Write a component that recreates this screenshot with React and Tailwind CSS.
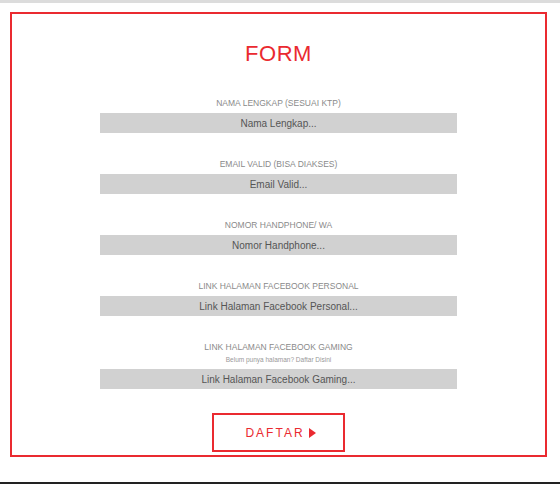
import React from "react";

const fields = [
  { label: "NAMA LENGKAP (SESUAI KTP)", placeholder: "Nama Lengkap..." },
  { label: "EMAIL VALID (BISA DIAKSES)", placeholder: "Email Valid..." },
  { label: "NOMOR HANDPHONE/ WA", placeholder: "Nomor Handphone..." },
  { label: "LINK HALAMAN FACEBOOK PERSONAL", placeholder: "Link Halaman Facebook Personal..." },
  {
    label: "LINK HALAMAN FACEBOOK GAMING",
    note: "Belum punya halaman? Daftar Disini",
    placeholder: "Link Halaman Facebook Gaming...",
  },
];

export default function App() {
  return (
    <div
      className="flex min-h-[484px] w-[560px] flex-col bg-white"
      style={{ fontFamily: '"Liberation Sans", Arial, sans-serif' }}
    >
      <div className="h-[3px] bg-[#dcdcdc]" />
      <div className="pt-[9px]">
        <div className="ml-[10px] flex h-[445px] w-[537px] flex-col items-center border-2 border-[#ea2a30] pt-[27px]">
          <h1 className="h-[26px] text-[22px] leading-[26px] font-normal tracking-[0.5px] text-[#ea2a30]">FORM</h1>

          <div className="mt-[30px] flex flex-col gap-[25px]">
            {fields.map((f, i) => (
              <div key={i} className="flex w-[357px] flex-col items-center">
                <label className={`text-[8.5px] leading-[12px] text-[#8a8a8a] ${f.note ? "mb-[3px]" : "mb-[4px]"}`}>
                  {f.label}
                </label>
                {f.note && (
                  <div className="mb-[5px] text-[6.5px] leading-[8px] text-[#999]">{f.note}</div>
                )}
                <input
                  type="text"
                  placeholder={f.placeholder}
                  className="h-[20px] w-full bg-[#d1d1d1] text-center text-[10px] text-[#555] outline-none placeholder:text-[#555]"
                />
              </div>
            ))}
          </div>

          <button className="mt-[24px] flex h-[39px] w-[133px] items-center justify-center gap-[4px] border-2 border-[#ea2a30] pl-[4px] text-[12px] tracking-[2px] text-[#ea2a30]">
            <span>DAFTAR</span>
            <svg width="7" height="10" viewBox="0 0 7 10">
              <polygon points="0,0 7,5 0,10" fill="#ea2a30" />
            </svg>
          </button>
        </div>
      </div>
      <div className="flex-1" />
      <div className="h-[2px] bg-[#222]" />
    </div>
  );
}
